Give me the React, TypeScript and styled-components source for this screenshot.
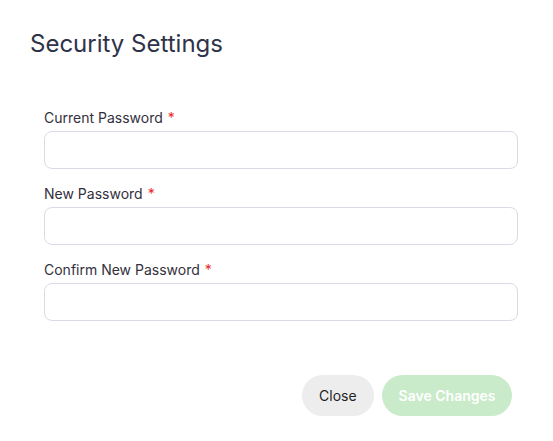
import React from 'react';
import styled, { createGlobalStyle } from 'styled-components';

const GlobalStyle = createGlobalStyle`
  html, body {
    margin: 0;
    padding: 0;
    background: #ffffff;
    font-family: Inter, "Noto Sans", sans-serif;
  }
`;

const Modal = styled.div`
  width: 553px;
  height: 441px;
  box-sizing: border-box;
  background: #ffffff;
  display: flex;
  flex-direction: column;
`;

const Header = styled.div`
  padding: 28px 30px 0 30px;
`;

const Title = styled.h2`
  margin: 0;
  font-size: 24px;
  line-height: 32px;
  font-weight: 400;
  color: #2f3349;
`;

const Form = styled.form`
  display: flex;
  flex-direction: column;
  gap: 15px;
  padding: 48px 35px 0 44px;
`;

const Field = styled.div`
  display: flex;
  flex-direction: column;
  gap: 3px;
`;

const Label = styled.label`
  font-size: 14px;
  line-height: 20px;
  color: #33303c;
`;

const Required = styled.span`
  color: #ea2a2a;
  margin-left: 5px;
`;

const Input = styled.input`
  height: 38px;
  box-sizing: border-box;
  border: 1px solid #dcdae6;
  border-radius: 8px;
  padding: 0 12px;
  font-family: inherit;
  font-size: 14px;
  outline: none;
`;

const Footer = styled.div`
  display: flex;
  justify-content: flex-end;
  gap: 8px;
  padding: 54px 41px 0 0;
`;

const Button = styled.button<{ $variant: 'close' | 'save' }>`
  height: 41px;
  border: none;
  border-radius: 21px;
  padding: 0 ${({ $variant }) => ($variant === 'save' ? 16.5 : 17.5)}px;
  font-family: inherit;
  font-size: 14px;
  cursor: pointer;
  background: ${({ $variant }) => ($variant === 'save' ? '#c9ebc9' : '#ededed')};
  color: ${({ $variant }) => ($variant === 'save' ? '#ffffff' : '#1f1f1f')};
  font-weight: ${({ $variant }) => ($variant === 'save' ? 600 : 400)};
`;

const fields = ['Current Password', 'New Password', 'Confirm New Password'];

const App: React.FC = () => {
  return (
    <>
      <GlobalStyle />
      <Modal>
        <Header>
          <Title>Security Settings</Title>
        </Header>
        <Form onSubmit={(e) => e.preventDefault()}>
          {fields.map((name) => (
            <Field key={name}>
              <Label>
                {name}
                <Required>*</Required>
              </Label>
              <Input type="password" />
            </Field>
          ))}
        </Form>
        <Footer>
          <Button type="button" $variant="close">Close</Button>
          <Button type="button" $variant="save">Save Changes</Button>
        </Footer>
      </Modal>
    </>
  );
};

export default App;
